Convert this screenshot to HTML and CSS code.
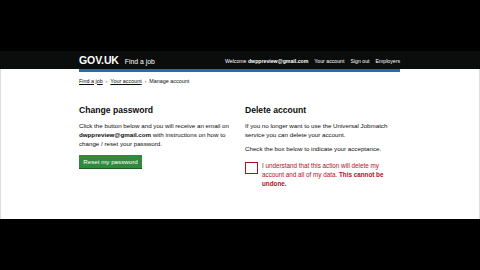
FILE: index.html
```html
<!DOCTYPE html>
<html lang="en">
<head>
<meta charset="utf-8">
<title>Manage account - Find a job</title>
<link rel="stylesheet" href="styles.css">
</head>
<body>
<div class="letterbox-top"></div>
<header class="site-header">
  <div class="wrap header-inner">
    <div class="brand">
      <span class="logo">GOV.UK</span>
      <span class="service">Find a job</span>
    </div>
    <nav class="nav">
      <span class="welcome">Welcome <b>dwppreview@gmail.com</b></span>
      <a href="#">Your account</a>
      <a href="#">Sign out</a>
      <a href="#">Employers</a>
    </nav>
  </div>
</header>
<main class="page">
  <div class="wrap">
    <div class="blue-bar"></div>
    <div class="breadcrumbs">
      <a href="#">Find a job</a><span class="sep">›</span><a href="#">Your account</a><span class="sep">›</span><span>Manage account</span>
    </div>
    <div class="columns">
      <section class="col">
        <h2>Change password</h2>
        <p>Click the button below and you will receive an email on <b>dwppreview@gmail.com</b> with instructions on how to change / reset your password.</p>
        <button class="btn">Reset my password</button>
      </section>
      <section class="col">
        <h2>Delete account</h2>
        <p>If you no longer want to use the Universal Jobmatch service you can delete your account.</p>
        <p>Check the box below to indicate your acceptance.</p>
        <label class="confirm">
          <span class="box"></span>
          <span class="confirm-text">I understand that this action will delete my account and all of my data. <b>This cannot be undone.</b></span>
        </label>
      </section>
    </div>
  </div>
</main>
</body>
</html>
```

FILE: styles.css
```css
* { box-sizing: border-box; }
html, body { margin: 0; padding: 0; }
body {
  background: #000;
  font-family: "Liberation Sans", Arial, sans-serif;
  color: #0b0c0c;
  width: 480px;
  height: 270px;
  overflow: hidden;
}
.letterbox-top { height: 51px; background: #000; }
.wrap { width: 321px; margin-left: 79px; }
.site-header { background: #0b0c0c; height: 18px; }
.header-inner {
  display: flex;
  align-items: center;
  justify-content: space-between;
  height: 18px;
  color: #fff;
}
.brand { display: flex; align-items: baseline; gap: 6px; }
.logo { font-weight: 700; font-size: 10.5px; letter-spacing: -0.1px; }
.service { font-size: 6.8px; }
.nav { display: flex; align-items: baseline; gap: 6px; font-size: 5.2px; padding-top: 2px; }
.nav a { color: #fff; text-decoration: none; }
.welcome b { font-weight: 700; }
.page { background: #fff; height: 150px; border-left: 1px solid #ddd; border-right: 1px solid #ddd; }
.page .wrap { margin-left: 78px; }
.blue-bar { height: 3px; background: #1d70b8; }
.breadcrumbs { font-size: 5.4px; margin-top: 5px; color: #0b0c0c; display: flex; align-items: center; height: 7px; }
.breadcrumbs a { color: #0b0c0c; text-decoration: underline; }
.sep { color: #777; margin: 0 3px; font-size: 5px; }
.columns { display: grid; grid-template-columns: 156px 155px; column-gap: 10px; margin-top: 21px; }
.col { display: flex; flex-direction: column; align-items: flex-start; }
h2 { font-size: 8.6px; line-height: 10px; font-weight: 700; margin: 0 0 6px; }
p { font-size: 6.2px; line-height: 9px; margin: 0 0 5.4px; }
.btn {
  display: block;
  background: #2f8a3c;
  color: #fff;
  border: 0;
  font-family: inherit;
  font-size: 6.2px;
  line-height: 13px;
  white-space: nowrap;
  padding: 0;
  height: 13px;
  width: 63px;
  margin-top: 1.5px;
  box-shadow: 0 1px 0 #1c5a26;
}
.confirm { display: flex; gap: 4.5px; align-items: flex-start; margin-top: 3px; color: #b10e1e; }
.box { flex: none; width: 12.5px; height: 12.5px; border: 1.3px solid #b10e1e; background: #fff; }
.confirm-text { font-size: 6.3px; line-height: 8.8px; margin-top: 0.5px; }
.confirm-text b { font-weight: 700; }
```
